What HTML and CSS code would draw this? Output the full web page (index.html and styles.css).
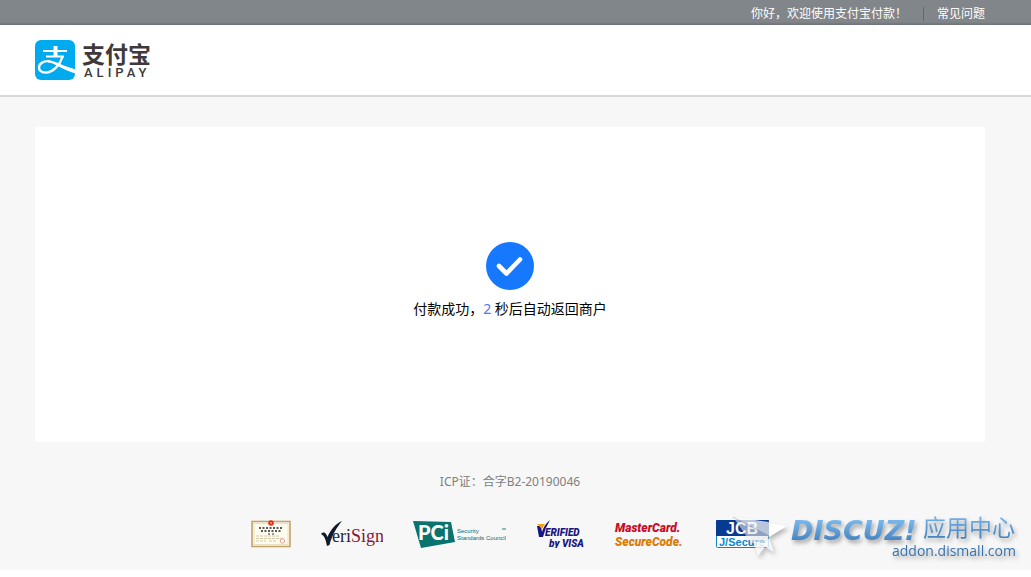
FILE: index.html
```html
<!DOCTYPE html>
<html lang="zh-CN">
<head>
<meta charset="utf-8">
<title>支付宝</title>
<link rel="stylesheet" href="styles.css">
</head>
<body>
<div class="page">
  <div class="topbar">
    <div class="container topbar-inner">
      <span class="greeting">你好，欢迎使用支付宝付款！</span>
      <a class="faq" href="#faq">常见问题</a>
    </div>
  </div>
  <header class="header">
    <div class="container">
      <a class="brand" href="#home" aria-label="支付宝 ALIPAY">
        <svg class="brand-mark" viewBox="0 0 40 40" aria-hidden="true">
          <rect width="40" height="40" rx="6" fill="#00aaef"/>
          <g fill="none" stroke="#fff">
            <path d="M20.500 6V17" stroke-width="4"/>
            <path d="M8 11H32M11 16.600H29" stroke-width="2"/>
            <path d="M27.600 16.500C25.500 23.500 19 32.400 10.500 32.600C5.500 32.600 3.800 29.600 4 27C4.400 23.400 8.600 20.800 13.600 21.200" stroke-width="2.400"/>
            <path d="M13 21.200C19 21.300 27 27.500 40 30.600" stroke-width="2.600"/>
          </g>
          <path d="M24 24Q31 28 40 29.500V33.500C35 32 28 29 22 25.500Z" fill="#fff"/>
        </svg>
        <span class="brand-name"><span class="brand-cn">支付宝</span><span class="brand-en">ALIPAY</span></span>
      </a>
    </div>
  </header>
  <main class="container result">
    <svg class="tick" viewBox="0 0 48 48" aria-hidden="true">
      <circle cx="24" cy="24" r="24" fill="#1677ff"/>
      <path d="M13 24L20.500 31.500L34 17.500" fill="none" stroke="#fff" stroke-width="4.600" stroke-linecap="round" stroke-linejoin="round"/>
    </svg>
    <p class="message">付款成功，<span class="seconds">2</span> 秒后自动返回商户</p>
  </main>
  <footer class="container footer">
    <p class="icp">ICP证：合字B2-20190046</p>
    <div class="badges">
      <svg width="40" height="28" viewBox="0 0 40 28" role="img" aria-label="营业执照">
        <rect x="1" y="1.500" width="38" height="25" fill="#fffdf2" stroke="#c2a36b" stroke-width="1.600"/>
        <rect x="3" y="3.500" width="34" height="21" fill="none" stroke="#eadfc0"/>
        <path d="M8 8H32M10 11H30" stroke="#222" stroke-width="1.600" stroke-dasharray="2 1.500"/>
        <path d="M17 14H23" stroke="#333" stroke-dasharray="2 2"/>
        <path d="M5 16H28M5 18.500H33M5 21H15M18 21H25" stroke="#d3c6a4" stroke-dasharray="3 1"/>
        <circle cx="20" cy="3" r="2.800" fill="#e62c22"/>
        <path d="M19 3h2" stroke="#fbd36b"/>
        <circle cx="31.500" cy="21" r="2.200" fill="none" stroke="#e8a492"/>
      </svg>
      <svg width="62" height="28" viewBox="0 0 62 28" role="img" aria-label="VeriSign">
        <path d="M0 14C3 11 5 13 6.500 17C10 9 15 3.500 21 1C16 7 11 15 8.500 25L6 26C5 21 4 16 0 14Z" fill="#111b2c"/>
        <text class="verisign" x="11" y="22" fill="#26243a">eri</text>
        <text class="verisign" x="30" y="22" fill="#8c1338">Sign</text>
      </svg>
      <svg width="93" height="28" viewBox="0 0 93 28" role="img" aria-label="PCI Security Standards Council">
        <path d="M0 1L38 2L42 22L8 28Z" fill="#08736f"/>
        <text class="pci" x="5" y="20" fill="#fff">PCi</text>
        <text class="pci-sub" x="44" y="13">Security</text>
        <text class="pci-sub" x="44" y="20">Standards Council</text>
        <path d="M89 9h4" stroke="#277f82"/>
      </svg>
      <svg width="48" height="28" viewBox="0 0 48 28" role="img" aria-label="Verified by VISA">
        <path d="M1 6L5 6L6 12Q8 5 14 0Q9 8 7 17H3Z" fill="#171680"/>
        <path d="M1 4L9 4L6 9Z" fill="#f6a11a"/>
        <text class="verified" x="9" y="16">ERIFIED</text>
        <text class="verified" x="13" y="27">by VISA</text>
      </svg>
      <svg width="72" height="28" viewBox="0 0 72 28" role="img" aria-label="MasterCard SecureCode">
        <text class="mastercard" x="1" y="12" fill="#c50d28">MasterCard.</text>
        <text class="mastercard" x="1" y="26" fill="#dc7a08">SecureCode.</text>
      </svg>
      <svg width="53" height="28" viewBox="0 0 53 28" role="img" aria-label="JCB J/Secure">
        <rect x="0.500" y="0.500" width="52" height="27" rx="1" fill="#fff" stroke="#1384c7"/>
        <path d="M0 1Q0 0 1 0H52Q53 0 53 1V16H0Z" fill="#063b91"/>
        <text class="jcb" x="10" y="14" fill="#fff">JCB</text>
        <text class="jsecure" x="3" y="26" fill="#0788c9">J/Secure</text>
      </svg>
    </div>
  </footer>
  <svg class="watermark" width="288" height="56" viewBox="0 0 288 56" role="img" aria-label="Discuz! 应用中心 addon.dismall.com">
    <defs>
      <linearGradient id="blue" x1="0" y1="0" x2="0" y2="1">
        <stop offset="0.200" stop-color="#77b5e9"/>
        <stop offset="0.900" stop-color="#3f7ebd"/>
      </linearGradient>
    </defs>
    <g class="plane">
      <path d="M-2 3L34 8V22Z" fill="#fff" fill-opacity="0.720"/>
      <path d="M-2 3L34 22L30 32L14 26Z" fill="#fff" fill-opacity="0.550"/>
      <path d="M34 9L52 12L34 23Z" fill="#fff"/>
      <path d="M14 27L19 29L23 42L30 33L39 38L34 24L30 29Z" fill="#fff" fill-opacity="0.800"/>
      <path d="M-2 3L34 22" stroke="#8ea0bb" stroke-width="0.600"/>
    </g>
    <g class="lettering" fill="url(#blue)">
      <text class="discuz" x="56" y="26">DISCUZ!</text>
      <text class="center" x="188" y="22">应用中心</text>
      <text class="domain" x="157" y="42">addon.dismall.com</text>
    </g>
  </svg>
</div>
</body>
</html>
```
FILE: styles.css
```css
* { box-sizing: border-box; }
body {
  margin: 0;
  background: #fff;
  color: #000;
  font: 12px/18px "Noto Sans", "Noto Sans CJK SC", sans-serif;
}
p { margin: 0; }
a { color: inherit; text-decoration: none; }
svg { display: block; flex: none; }
.page {
  position: relative;
  padding-bottom: 22px;
  background: #f7f7f7;
}
.container { margin: 0 46px 0 35px; }
.topbar {
  background: linear-gradient(#81868a 88%, #6c7073);
  color: #fff;
}
.topbar-inner {
  display: flex;
  justify-content: flex-end;
  align-items: center;
  height: 25px;
  padding-top: 2px;
}
.greeting { padding-right: 16px; }
.faq {
  padding-left: 13px;
  border-left: 1px solid #65696c;
  line-height: 14px;
}
.header {
  padding: 15px 0;
  background: #fff;
  border-bottom: 2px solid #d9d9d9;
}
.brand {
  display: inline-flex;
  gap: 7px;
  vertical-align: top;
  color: #40383a;
}
.brand-mark { width: 40px; height: 40px; }
.brand-name { display: flex; flex-direction: column; }
.brand-cn {
  font: 700 23px/26px "Noto Sans CJK SC", sans-serif;
}
.brand-en {
  padding-left: 2px;
  font: 500 13px/14px Roboto, sans-serif;
  letter-spacing: 4px;
}
.result {
  display: flex;
  flex-direction: column;
  align-items: center;
  gap: 9px;
  margin-top: 30px;
  padding: 115px 0 123px;
  background: #fff;
}
.tick { width: 48px; height: 48px; }
.message { font-size: 14px; line-height: 20px; }
.seconds { color: #4876ff; }
.footer {
  display: flex;
  flex-direction: column;
  align-items: center;
  gap: 29px;
  padding-top: 31px;
}
.icp { color: #808080; }
.badges { display: flex; gap: 30px; }
.verisign { font: 18px "Liberation Serif", serif; stroke: currentColor; stroke-width: 0; }
.pci { font: 900 20px Lato, sans-serif; }
.pci-sub { font: 6px "Liberation Sans", sans-serif; fill: #086c70; }
.verified { font: italic 900 10px Roboto, sans-serif; fill: #171680; }
.mastercard { font: italic 900 12px Roboto, sans-serif; }
.jcb { font: 700 16px "Liberation Sans", sans-serif; }
.jsecure { font: 700 11px "Liberation Sans", sans-serif; }
.watermark {
  position: absolute;
  right: 8px;
  bottom: 0;
  overflow: visible;
}
.plane { filter: drop-shadow(2px 3px 2px #0004); }
.lettering { filter: drop-shadow(2px 3px 2px #0005); }
.discuz { font: italic 700 27px "DejaVu Sans", sans-serif; }
.center { font: 23px "Noto Sans CJK SC", sans-serif; }
.domain { font: 14px "Open Sans", sans-serif; fill: #3674af; }
```
